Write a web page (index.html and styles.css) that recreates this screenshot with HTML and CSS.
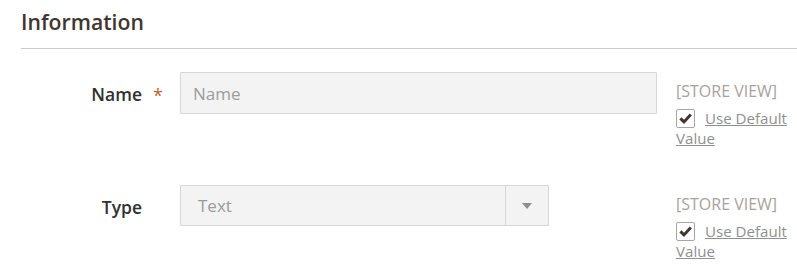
FILE: index.html
```html
<!DOCTYPE html>
<html>
<head>
<meta charset="utf-8">
<link rel="stylesheet" href="styles.css">
</head>
<body>
<div class="section">
  <div class="section-title">Information</div>
  <div class="field">
    <div class="label">Name <span class="star">*</span></div>
    <div class="control"><input class="input" type="text" placeholder="Name" disabled></div>
    <div class="scope">
      <div class="scope-label">[STORE VIEW]</div>
      <label class="use-default"><span class="checkbox"><svg viewBox="0 0 19 19" width="19" height="19"><path d="M4.4 9.4 L8 12.9 L14.8 5.6" fill="none" stroke="#41362f" stroke-width="3"/></svg></span><span class="link">Use Default Value</span></label>
    </div>
  </div>
  <div class="field">
    <div class="label">Type</div>
    <div class="control"><div class="select"><span class="select-text">Text</span><span class="select-arrow"><span class="tri"></span></span></div></div>
    <div class="scope">
      <div class="scope-label">[STORE VIEW]</div>
      <label class="use-default"><span class="checkbox"><svg viewBox="0 0 19 19" width="19" height="19"><path d="M4.4 9.4 L8 12.9 L14.8 5.6" fill="none" stroke="#41362f" stroke-width="3"/></svg></span><span class="link">Use Default Value</span></label>
    </div>
  </div>
</div>
</body>
</html>
```
FILE: styles.css
```css
html, body { margin: 0; padding: 0; background: #fff; }
body { font-family: "Open Sans", "Liberation Sans", sans-serif; color: #303030; overflow: hidden; }
.section { padding: 8px 0 0 21px; }
.section-title {
  font-size: 21.2px; font-weight: 600; color: #41362f; line-height: 28px;
  padding-bottom: 12px; border-bottom: 1px solid #cccccc; margin-bottom: 23px;
}
.field { display: flex; align-items: flex-start; }
.field + .field { margin-top: 37px; }
.label {
  flex: none; width: 121px; text-align: right; font-size: 17.5px; font-weight: 600;
  color: #303030; padding-top: 11px; line-height: 22px; box-sizing: border-box;
  position: relative; margin-right: 38px; white-space: nowrap;
}
.star { position: absolute; left: 132px; top: 12px; color: #c0651f; font-weight: 400; font-size: 18px; }
.control { width: 477px; flex: none; }
.input {
  display: block; width: 477px; height: 42px; box-sizing: border-box; margin: 0;
  background: #f3f3f3; border: 1px solid #d6d6d6; border-radius: 1px;
  font-family: inherit; font-size: 17px; padding: 0 12px; color: #989898;
}
.input::placeholder { color: #9c9c9c; }
.select {
  width: 369px; height: 41px; box-sizing: border-box; display: flex;
  background: #f3f3f3; border: 1px solid #d6d6d6; border-radius: 1px;
}
.select-text { flex: 1; font-size: 17px; color: #9a9a9a; padding-left: 17px; line-height: 40px; }
.select-arrow { width: 42px; border-left: 1px solid #d6d6d6; display: flex; align-items: center; justify-content: center; }
.tri { width: 0; height: 0; border-left: 5px solid transparent; border-right: 5px solid transparent; border-top: 6px solid #8e8e8e; }
.scope { flex: none; margin-left: 19px; padding-top: 9px; width: 116px; }
.scope-label { font-size: 16px; color: #a8a29d; line-height: 20px; white-space: nowrap; }
.use-default { display: block; font-size: 15.1px; line-height: 20px; margin-top: 7px; color: #8f8f8f; }
.checkbox {
  display: inline-block; width: 19px; height: 19px; box-sizing: border-box;
  border: 1px solid #a6a6a6; border-radius: 2px; vertical-align: -4px; margin-right: 10px; position: relative; background: #fff;
}
.checkbox svg { position: absolute; left: -1px; top: -1px; }
.link { text-decoration: underline; color: #8f8f8f; }
```
